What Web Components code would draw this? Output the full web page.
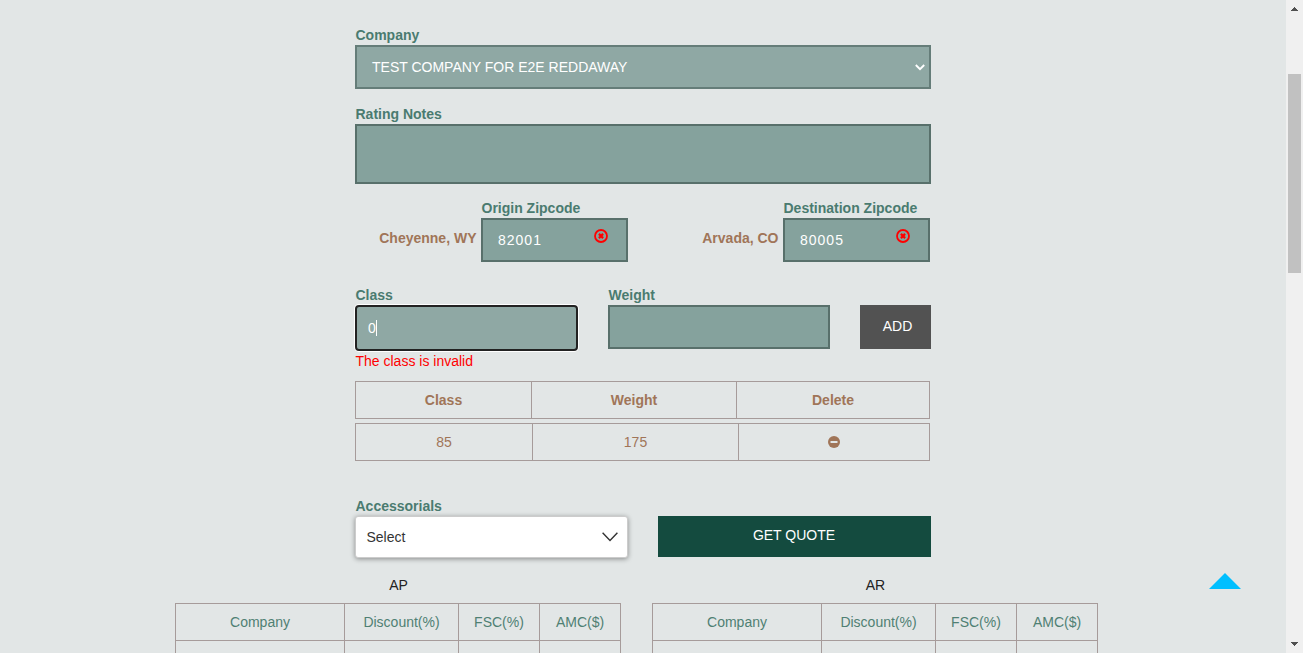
<!DOCTYPE html>
<html lang="en">
<head>
<meta charset="utf-8">
<title>Rating quote</title>
<style>
html,body{margin:0;height:100%;overflow:hidden}
body{font:14px/20px "Liberation Sans",Arial,sans-serif;background:#e2e6e6;color:#222}
</style>
</head>
<body>
<rate-app></rate-app>
<script>
const define = (name, html) => customElements.define(name, class extends HTMLElement {
  constructor() {
    super();
    const t = document.createElement('template');
    t.innerHTML = html;
    this.attachShadow({mode: 'open'}).appendChild(t.content.cloneNode(true));
  }
});

define('form-field', `<style>
:host{display:block}
.label{height:20px;padding-left:.5px;font-weight:bold;color:#4a7b70;white-space:nowrap}
.box{box-sizing:border-box;height:var(--h,44px);border:2px solid #58706b;background:#85a29d;color:#fff;
 display:flex;align-items:center;justify-content:space-between;padding:var(--pad,0 15px)}
:host([tone=light]) .box{background:#8fa8a4;border-color:#657d79}
:host([focused]) .box{background:#8fa8a4;border-color:#222;border-radius:4px;box-shadow:0 0 0 1px #fff;height:46px;justify-content:flex-start}
:host([plain]) .box{background:#fff;color:#333;border:1px solid #ccc;border-radius:3px;box-shadow:0 1px 5px rgba(0,0,0,.4)}
</style><div class="label"><slot name="label"></slot></div><div class="box"><slot></slot></div><slot name="error"></slot>`);

define('clear-icon', `<style>:host{display:block;width:14px;height:14px}svg{display:block}</style>
<svg width="14" height="14" viewBox="0 0 14 14" fill="none" stroke="#f00"><circle cx="7" cy="7" r="6" stroke-width="1.8"/><path d="M4.9 4.9l4.2 4.2M9.1 4.9L4.9 9.1" stroke-width="2.2"/></svg>`);

define('minus-icon', `<style>:host{display:block;width:12px;height:12px}svg{display:block}</style>
<svg width="12" height="12" viewBox="0 0 12 12"><circle cx="6" cy="6" r="6" fill="#a07558"/><rect x="2.5" y="5" width="7" height="2" fill="#e2e6e6"/></svg>`);

define('chevron-icon', `<style>:host{display:block}svg{display:block}:host([large]) .s,:host(:not([large])) .l{display:none}</style>
<svg class="s" width="10" height="7" viewBox="0 0 10 7" fill="none" stroke="#fff" stroke-width="1.9"><path d="M.8 1L5 5.2 9.2 1"/></svg>
<svg class="l" width="16" height="10" viewBox="0 0 16 10" fill="none" stroke="#333" stroke-width="1.4"><path d="M.6.7L8 8.5 15.4.7"/></svg>`);

define('action-button', `<style>:host{display:flex;box-sizing:border-box;justify-content:center;align-items:center;color:#fff;padding-bottom:2px}</style><slot></slot>`);

define('grid-row', `<style>
:host{display:grid;grid-template-columns:var(--cols);height:38px;box-sizing:border-box;border:1px solid #a69b9a}
::slotted(*){display:flex;align-items:center;justify-content:center;border-left:1px solid #a69b9a}
::slotted(:first-child){border-left:0}
</style><slot></slot>`);

define('rate-table', `<style>
:host{display:block;width:446px;--cols:168px 114px 81px 81px}
.title{text-align:center;height:28px;color:#222;padding-left:1px}
grid-row{color:#4f8073}
grid-row+grid-row{margin-top:-1px}
</style><div class="title"><slot></slot></div>
<grid-row><span>Company</span><span>Discount(%)</span><span>FSC(%)</span><span>AMC($)</span></grid-row>
<grid-row><span></span><span></span><span></span><span></span></grid-row>`);

define('scroll-bar', `<style>
:host{display:flex;flex-direction:column;align-items:center;justify-content:space-between;width:17px;height:100%;background:#f0f0f0}
.track{flex:1;padding-top:57px}.thumb{width:13px;height:199px;background:#c1c1c1}
svg{display:block}
</style><svg width="17" height="17" shape-rendering="crispEdges"><path d="M5 11h7L8.5 7z" fill="#505050"/></svg>
<div class="track"><div class="thumb"></div></div>
<svg width="17" height="17" shape-rendering="crispEdges"><path d="M5 6h7L8.5 10z" fill="#505050"/></svg>`);

define('quote-form', `<style>
:host{display:block;width:576px;margin:0 auto;padding-top:25px}
.notes{margin-top:15px;--h:60px}
.zips{display:flex;margin-top:14px;height:64px}
.place{font-weight:bold;color:#a07558;text-align:right;padding:30px 4.5px 0 0;box-sizing:border-box}
.zips form-field{width:147px}
.num{letter-spacing:1px}
clear-icon{margin:-8px 3.5px 0 0}
.load{display:flex;margin-top:23px;height:96px;gap:30px}
.load form-field{width:222px}
.load form-field[focused]{width:223px}
.caret{width:1px;height:16px;background:#fff}
.err{color:#f00;display:block;padding-left:.5px}
.load action-button{width:71px;height:44px;margin-top:20px;padding-left:4px;background:#525252}
grid-row{width:575px;color:#a07558}
.head{--cols:175px 205px 193px;font-weight:bold}
.body{--cols:176px 206px 191px;margin-top:4px}
.end{display:flex;margin-top:35px;gap:30px}
.end form-field{width:273px;--h:42px;--pad:0 9px 0 10.5px}
.end action-button{width:273px;height:41px;margin-top:20px;background:#144b3f;padding:0 1px 3px 0}
</style>
<form-field tone="light"><span slot="label">Company</span><span>TEST COMPANY FOR E2E REDDAWAY</span><chevron-icon style="margin-right:-11px"></chevron-icon></form-field>
<form-field class="notes"><span slot="label">Rating Notes</span></form-field>
<div class="zips">
 <div class="place" style="width:126px">Cheyenne, WY</div>
 <form-field><span slot="label">Origin Zipcode</span><span class="num">82001</span><clear-icon></clear-icon></form-field>
 <div class="place" style="width:155px">Arvada, CO</div>
 <form-field><span slot="label">Destination Zipcode</span><span class="num">80005</span><clear-icon></clear-icon></form-field>
</div>
<div class="load">
 <form-field focused style="--pad:0 11px"><span slot="label">Class</span><span>0</span><span class="caret"></span><span slot="error" class="err">The class is invalid</span></form-field>
 <form-field><span slot="label">Weight</span></form-field>
 <action-button>ADD</action-button>
</div>
<grid-row class="head"><span>Class</span><span>Weight</span><span>Delete</span></grid-row>
<grid-row class="body"><span>85</span><span>175</span><span><minus-icon></minus-icon></span></grid-row>
<div class="end">
 <form-field plain><span slot="label">Accessorials</span><span>Select</span><chevron-icon large></chevron-icon></form-field>
 <action-button>GET QUOTE</action-button>
</div>`);

define('rate-app', `<style>
:host{display:flex;height:100vh;overflow:hidden}
main{flex:1;height:100%;overflow:hidden}
.tables{display:flex;gap:31px;margin:17px 0 0 175px}
.top{position:absolute;left:1209px;top:573px}
</style>
<main><quote-form></quote-form>
<div class="tables"><rate-table>AP</rate-table><rate-table>AR</rate-table></div></main>
<scroll-bar></scroll-bar>
<svg class="top" width="32" height="16"><path d="M0 16L16 0l16 16z" fill="#00bfff"/></svg>`);
</script>
</body>
</html>
